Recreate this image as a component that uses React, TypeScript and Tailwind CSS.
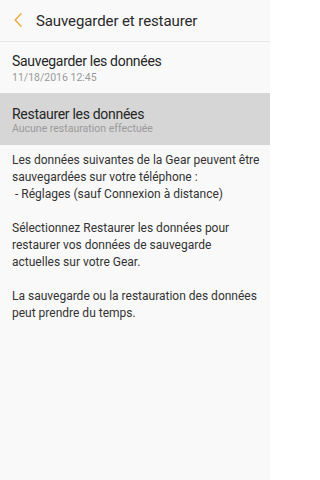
export default function App() {
  return (
    <div className="h-[480px] w-[270px] overflow-hidden bg-[#f9f9f9] font-['Roboto','Noto_Sans',sans-serif] text-[#262626]">
      <header className="flex h-[42px] items-center border-b border-[#e6e6e6] pl-[14px] pt-[1px]">
        <svg width="8" height="14" viewBox="0 0 8 14" fill="none" className="-mt-[2px] shrink-0">
          <path d="M7 0.8 L1.2 7 L7 13.2" stroke="#f2a33a" strokeWidth="1.3" strokeLinecap="round" strokeLinejoin="round" />
        </svg>
        <h1 className="ml-[14px] text-[15px] leading-none tracking-[-0.1px] text-[#2a2a2a]">
          Sauvegarder et restaurer
        </h1>
      </header>

      <div className="flex h-[51px] flex-col justify-center px-[12px] pt-[2px]">
        <div className="text-[14px] leading-[18px] tracking-[-0.3px]">Sauvegarder les données</div>
        <div className="mt-[1px] text-[10.5px] leading-[14px] text-[#9a9a9a]">11/18/2016 12:45</div>
      </div>

      <div className="flex h-[52px] flex-col justify-center bg-[#d6d6d6] px-[12px] pt-[3px]">
        <div className="text-[14px] leading-[18px] tracking-[-0.3px]">Restaurer les données</div>
        <div className="-mt-[1px] text-[10.5px] leading-[14px] text-[#9a9a9a]">Aucune restauration effectuée</div>
      </div>

      <div className="whitespace-nowrap pl-[12px] pt-[7px] text-[12px] leading-[17px] text-[#333]">
        <p>
          Les données suivantes de la Gear peuvent être
          <br />
          sauvegardées sur votre téléphone :
          <br />
          &nbsp;- Réglages (sauf Connexion à distance)
        </p>
        <p className="mt-[17px]">
          Sélectionnez Restaurer les données pour
          <br />
          restaurer vos données de sauvegarde
          <br />
          actuelles sur votre Gear.
        </p>
        <p className="mt-[17px]">
          La sauvegarde ou la restauration des données
          <br />
          peut prendre du temps.
        </p>
      </div>
    </div>
  )
}
